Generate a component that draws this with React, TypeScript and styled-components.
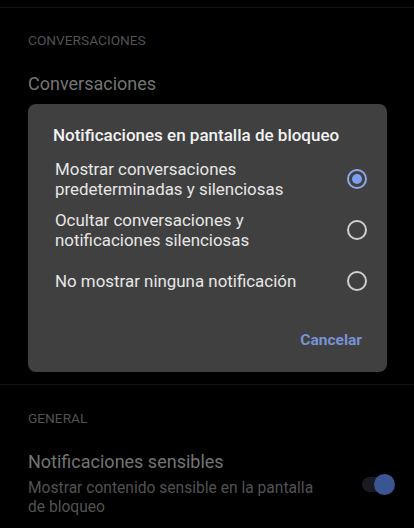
import React from "react";
import styled, { createGlobalStyle } from "styled-components";

const Global = createGlobalStyle`
  html, body { margin: 0; padding: 0; background: #000; }
  body { font-family: Roboto, "Noto Sans", sans-serif; }
  * { box-sizing: border-box; }
`;

const Screen = styled.div`
  width: 414px;
  height: 528px;
  background: #000;
  position: relative;
  overflow: hidden;
  display: flex;
  flex-direction: column;
`;

const Divider = styled.div<{ $mt: number }>`
  height: 1px;
  background: #141414;
  margin-top: ${(p) => p.$mt}px;
`;

const SectionLabel = styled.div<{ $mt: number }>`
  margin: ${(p) => p.$mt}px 0 0 28px;
  font-size: 13.7px;
  color: #525252;
  line-height: 16px;
`;

const ItemTitle = styled.div<{ $mt?: number }>`
  margin-top: ${(p) => p.$mt ?? 0}px;
  padding-left: 28px;
  font-size: 18px;
  color: #747474;
  line-height: 24px;
`;

const ToggleItem = styled.div`
  display: flex;
  align-items: center;
  justify-content: space-between;
  margin-top: 24px;
  padding-right: 22px;
`;

const ItemText = styled.div`
  display: flex;
  flex-direction: column;
`;

const ItemSub = styled.div`
  padding-left: 28px;
  margin-top: 5px;
  font-size: 15.6px;
  color: #525252;
  line-height: 19px;
  width: 330px;
`;

const Toggle = styled.div`
  position: relative;
  width: 30px;
  height: 15px;
  border-radius: 8px;
  background: #1a1a23;
  margin-top: 2px;
`;

const Thumb = styled.div`
  position: absolute;
  right: -3px;
  top: -3px;
  width: 21px;
  height: 21px;
  border-radius: 50%;
  background: #3b5592;
`;

const Dialog = styled.div`
  position: absolute;
  left: 28px;
  top: 104px;
  width: 359px;
  height: 268px;
  background: #404040;
  border-radius: 8px;
  padding: 19px 20px 0 25px;
  display: flex;
  flex-direction: column;
  box-shadow: 0 2px 8px rgba(0, 0, 0, 0.5);
`;

const DialogTitle = styled.div`
  font-size: 17px;
  font-weight: 500;
  color: #f2f2f2;
  line-height: 24px;
  margin-bottom: 7px;
`;

const Option = styled.div<{ $h: number }>`
  display: flex;
  align-items: center;
  justify-content: space-between;
  height: ${(p) => p.$h}px;
  padding-left: 2px;
`;

const OptionText = styled.div`
  font-size: 16.9px;
  color: #e6e6e6;
  line-height: 20px;
`;

const Radio = styled.div<{ $on?: boolean }>`
  width: 20px;
  height: 20px;
  border-radius: 50%;
  border: 2px solid ${(p) => (p.$on ? "#8ea6ea" : "#cfcfcf")};
  display: flex;
  align-items: center;
  justify-content: center;
  flex-shrink: 0;
  &::after {
    content: "";
    display: ${(p) => (p.$on ? "block" : "none")};
    width: 10px;
    height: 10px;
    border-radius: 50%;
    background: #7e9ff0;
  }
`;

const Actions = styled.div`
  display: flex;
  justify-content: flex-end;
  margin-top: 24px;
  padding-right: 5px;
`;

const CancelButton = styled.div`
  font-size: 15.5px;
  font-weight: 700;
  color: #7892d6;
  line-height: 20px;
`;

export default function App() {
  return (
    <Screen>
      <Global />
      <Divider $mt={7} />
      <SectionLabel $mt={24}>CONVERSACIONES</SectionLabel>
      <ItemTitle $mt={24}>Conversaciones</ItemTitle>
      <Divider $mt={288} />
      <SectionLabel $mt={25}>GENERAL</SectionLabel>
      <ToggleItem>
        <ItemText>
          <ItemTitle>Notificaciones sensibles</ItemTitle>
          <ItemSub>
            Mostrar contenido sensible en la pantalla de bloqueo
          </ItemSub>
        </ItemText>
        <Toggle>
          <Thumb />
        </Toggle>
      </ToggleItem>

      <Dialog>
        <DialogTitle>Notificaciones en pantalla de bloqueo</DialogTitle>
        <Option $h={50}>
          <OptionText>
            Mostrar conversaciones
            <br />
            predeterminadas y silenciosas
          </OptionText>
          <Radio $on />
        </Option>
        <Option $h={51}>
          <OptionText>
            Ocultar conversaciones y
            <br />
            notificaciones silenciosas
          </OptionText>
          <Radio />
        </Option>
        <Option $h={51}>
          <OptionText>No mostrar ninguna notificación</OptionText>
          <Radio />
        </Option>
        <Actions>
          <CancelButton>Cancelar</CancelButton>
        </Actions>
      </Dialog>
    </Screen>
  );
}
